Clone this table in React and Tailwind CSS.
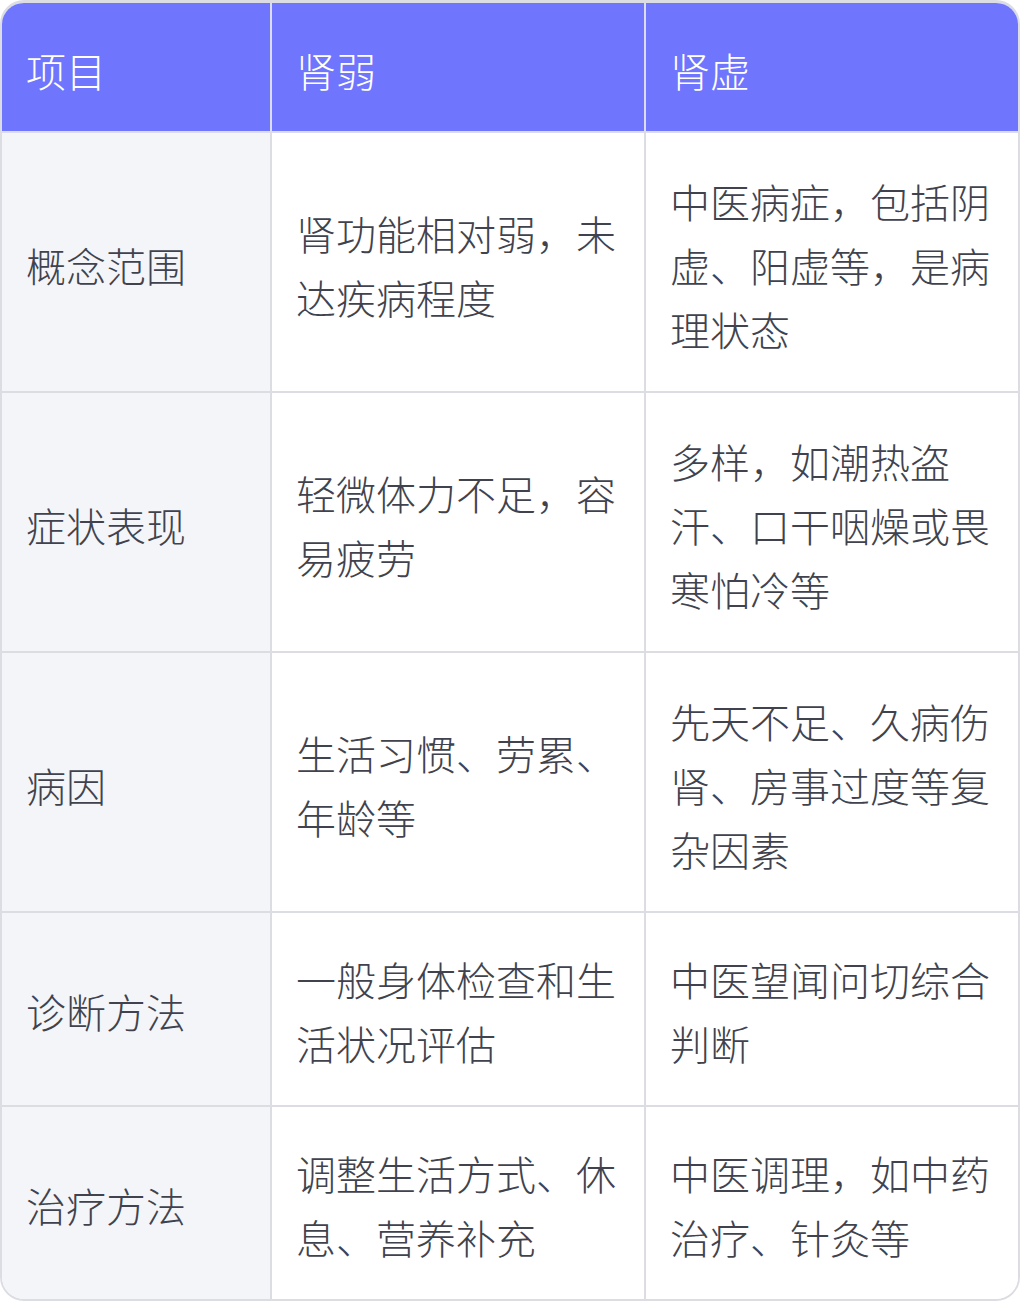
const header = ['项目', '肾弱', '肾虚']

const rows = [
  ['概念范围', '肾功能相对弱，未达疾病程度', '中医病症，包括阴虚、阳虚等，是病理状态'],
  ['症状表现', '轻微体力不足，容易疲劳', '多样，如潮热盗汗、口干咽燥或畏寒怕冷等'],
  ['病因', '生活习惯、劳累、年龄等', '先天不足、久病伤肾、房事过度等复杂因素'],
  ['诊断方法', '一般身体检查和生活状况评估', '中医望闻问切综合判断'],
  ['治疗方法', '调整生活方式、休息、营养补充', '中医调理，如中药治疗、针灸等'],
]

export default function App() {
  return (
    <div className="w-[1020px] bg-white" style={{ fontFamily: '"Noto Sans CJK SC", "Noto Sans", sans-serif' }}>
      <div className="border-2 border-t-[3px] border-[#dcdde3] rounded-3xl overflow-hidden">
        <div className="grid grid-cols-[270px_374px_1fr] text-[40px] leading-[64px] font-light">
          {header.map((h, i) => (
            <div
              key={h}
              className={`bg-[#7075fe] text-white px-6 pt-[35px] pb-[29px] border-b-2 border-[#dcdde3] ${i < 2 ? 'border-r-2' : ''}`}
            >
              {h}
            </div>
          ))}
          {rows.map((r, ri) =>
            r.map((c, ci) => (
              <div
                key={ri + '-' + ci}
                className={`flex items-center px-6 text-[#40434e] border-[#dcdde3] ${ri < 3 ? 'pt-[36px] pb-[30px]' : 'pt-[34px] pb-[30px]'} ${ci < 2 ? 'border-r-2' : ''} ${ri < rows.length - 1 ? 'border-b-2' : ''} ${ci === 0 ? 'bg-[#f4f5f9]' : 'bg-white'}`}
              >
                <span>{c}</span>
              </div>
            ))
          )}
        </div>
      </div>
    </div>
  )
}
